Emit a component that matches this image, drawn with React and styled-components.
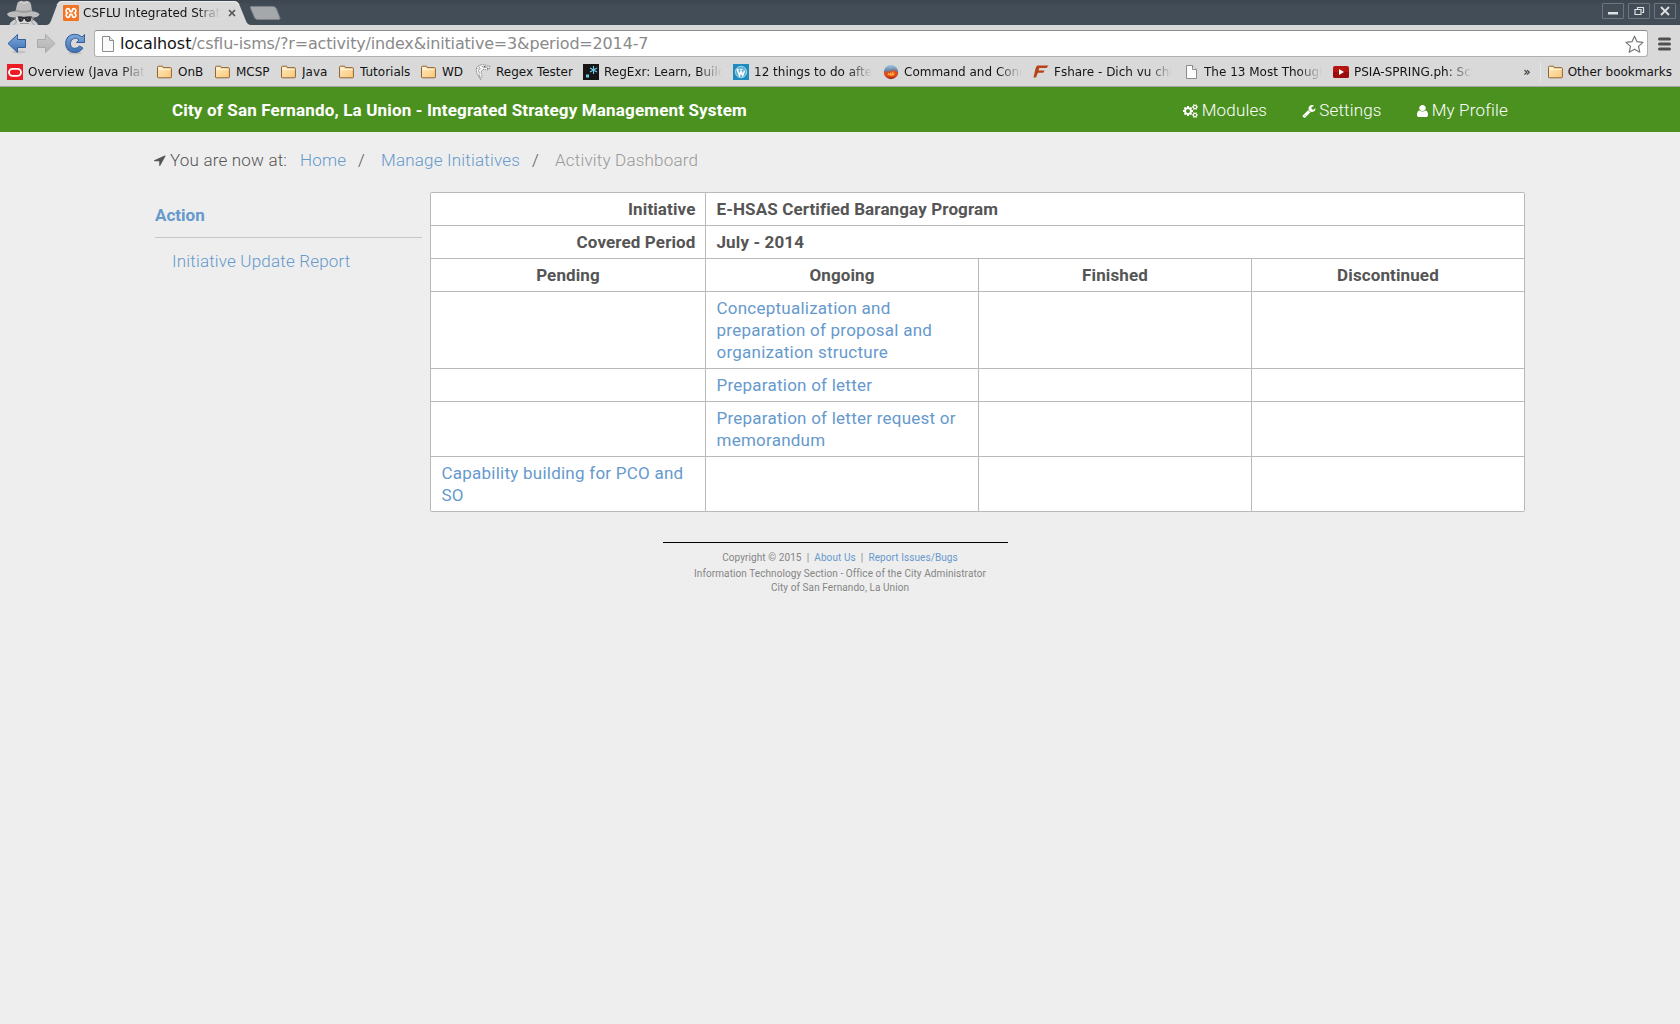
import React from 'react';
import styled, { createGlobalStyle } from 'styled-components';

const GlobalStyle = createGlobalStyle`
  * { box-sizing: border-box; }
  body { margin: 0; background: #eeeeee; font-family: Roboto, "Liberation Sans", sans-serif; color: #555555; }
  a { color: #6699cc; text-decoration: none; }
  svg { display: block; flex: none; }
`;

/* ---------- browser frame ---------- */

const Browser = styled.header`
  font-family: "DejaVu Sans", sans-serif;
  font-size: 12px;
  color: #141414;
  background: #d9d9d9;
  border-bottom: 1px solid #a6a6a6;
  height: 87px;
`;
const TitleBar = styled.div`
  height: 25px;
  display: flex;
  background: linear-gradient(#3d464f, #434d58 6px, #434d58);
`;
const Incognito = styled.div`
  width: 47px;
  padding-left: 7px;
`;
const Tab = styled.div`
  width: 203px;
  height: 25px;
  display: grid;
  > * { grid-area: 1 / 1; }
`;
const TabContent = styled.div`
  display: flex;
  align-items: center;
  padding: 1px 0 0 16px;
`;
const Fade = styled.span`
  display: block;
  overflow: hidden;
  white-space: nowrap;
  line-height: 18px;
  width: ${p => (p.$w ? `${p.$w}px` : 'auto')};
  mask-image: ${p => (p.$w ? 'linear-gradient(to right, #000 calc(100% - 24px), transparent)' : 'none')};
`;
const TabTitle = styled(Fade)`
  margin: 0 8px 0 4px;
`;
const NewTab = styled.div`
  padding: 6px 0 0 0;
`;
const WindowButtons = styled.div`
  margin: 3px 4px 0 auto;
  display: flex;
  gap: 4px;
`;
const WindowButton = styled.div`
  width: 22px;
  height: 16px;
  border: 1px solid #6d757e;
  border-radius: 1px;
  display: flex;
  align-items: center;
  justify-content: center;
`;

const Toolbar = styled.div`
  height: 32px;
  display: flex;
  align-items: center;
  padding: 5px 8px 0 7px;
`;
const NavButtons = styled.div`
  display: flex;
  width: 87px;
  gap: 9px;
`;
const AddressBar = styled.div`
  width: 1554px;
  height: 27px;
  background: #fff;
  border: 1px solid #b0b0b0;
  border-top-color: #8c8c8c;
  border-radius: 3px;
  display: flex;
  align-items: center;
  padding: 0 3px 0 7px;
`;
const Url = styled.span`
  flex: 1;
  font-size: 16px;
  line-height: 24px;
  margin-left: 6px;
  letter-spacing: -0.17px;
  color: #8a8a8a;
  b { font-weight: 400; color: #141414; letter-spacing: -0.05px; }
`;

const Bookmarks = styled.div`
  height: 29px;
  display: flex;
  align-items: center;
  padding: 0 8px 0 7px;
`;
const Bookmark = styled.div`
  width: ${p => (p.$w ? `${p.$w}px` : 'auto')};
  flex: none;
  display: flex;
  align-items: center;
  gap: ${p => p.$gap || 5}px;
`;
const Overflow = styled.span`
  margin-left: auto;
  padding-right: 9px;
  line-height: 18px;
`;
const Divider = styled.i`
  width: 1px;
  height: 22px;
  background: #e6e6e6;
  margin-right: 6px;
`;

/* ---------- page ---------- */

const NavBar = styled.nav`
  height: 45px;
  background: #4b9120;
  color: #fff;
  display: flex;
  align-items: center;
  padding: 0 172px;
  font-size: 17px;
  line-height: 22px;
`;
const Brand = styled.strong`
  font-weight: 700;
  letter-spacing: 0.16px;
  white-space: nowrap;
`;
const Menu = styled.div`
  margin-left: auto;
  display: flex;
  gap: 35px;
`;
const MenuItem = styled.span`
  display: flex;
  align-items: center;
  gap: ${p => p.$gap}px;
  font-weight: 300;
  letter-spacing: 0.18px;
  white-space: nowrap;
  svg { margin-top: 3px; }
`;
const Crumbs = styled.div`
  display: flex;
  align-items: center;
  height: 22px;
  margin: 17px 0 0 154px;
  font-size: 17px;
  line-height: 22px;
  font-weight: 300;
  letter-spacing: 0.19px;
  white-space: nowrap;
`;
const Crumb = styled.span`
  width: ${p => p.$w}px;
  color: ${p => p.$color || 'inherit'};
`;
const Layout = styled.div`
  display: flex;
  padding: 21px 0 0 154px;
`;
const Side = styled.aside`
  width: 267px;
  margin: 0 8px 0 1px;
  font-size: 17px;
  line-height: 22px;
`;
const SideTitle = styled.div`
  padding: 12px 0 11px;
  border-bottom: 1px solid #c6c6c6;
  color: #6699cc;
  font-weight: 700;
`;
const SideLink = styled.a`
  display: block;
  padding: 12px 0 0 17px;
  font-weight: 300;
  letter-spacing: 0.18px;
`;
const Table = styled.div`
  width: 1095px;
  display: grid;
  grid-template-columns: 274px 272px 272px 272px;
  gap: 1px;
  padding: 1px;
  background: #b9b9b9;
  border-radius: 2px;
  font-size: 17px;
  line-height: 22px;
`;
const Cell = styled.div`
  background: #fff;
  min-height: 32px;
  padding: 5px ${p => (p.$align === 'right' ? '9.5px' : '10.5px')} 5px 10.5px;
  grid-column: span ${p => p.$span || 1};
  text-align: ${p => p.$align || 'left'};
  font-weight: ${p => (p.$head ? 700 : 400)};
  letter-spacing: ${p => (p.$head ? '0.12px' : '0.24px')};
`;
const Footer = styled.footer`
  width: 345px;
  margin: 30px 0 0 663px;
  border-top: 1px solid #000;
  padding-top: 7px;
  font-size: 10px;
  letter-spacing: 0.08px;
  text-align: center;
  color: #858585;
`;
const FooterLine = styled.div`
  width: 354px;
  height: ${p => p.$h}px;
  line-height: 16px;
  white-space: pre;
`;

/* ---------- icons ---------- */

const Fa = ({ d, w, h, box = '0 0 1792 1792' }) => (
  <svg width={w} height={h} viewBox={box} fill="currentColor" preserveAspectRatio="none"><path d={d} /></svg>
);
const SMALL_COG_PATH = 'v140q0 16-149 31-12 27-30 52 51 113 51 138 0 4-4 7-122 71-124 71-8 0-46-47t-52-68q-20 2-30 2t-30-2q-14 21-52 68t-46 47q-2 0-124-71-4-3-4-7 0-25 51-138-18-25-30-52-149-15-149-31v-140q0-16 149-31 13-29 30-52-51-113-51-138 0-4 4-7 4-2 35-20t59-34 30-16q8 0 46 46.5t52 67.5q20-2 30-2t30 2q51-71 92-112l6-2q4 0 124 70 4 3 4 7 0 25-51 138 17 23 30 52 149 15 149 31z';
const COGS = 'M832 896q0-106-75-181t-181-75-181 75-75 181 75 181 181 75 181-75 75-181zm768 512q0-52-38-90t-90-38-90 38-38 90q0 53 37.5 90.5t90.5 37.5 90.5-37.5 37.5-90.5zm0-1024q0-52-38-90t-90-38-90 38-38 90q0 53 37.5 90.5t90.5 37.5 90.5-37.5 37.5-90.5zm-384 421v185q0 10-7 19.5t-16 10.5l-155 24q-11 35-32 76 34 48 90 115 7 11 7 20 0 12-7 19-23 30-82.5 89.5t-78.5 59.5q-11 0-21-7l-115-90q-37 19-77 31-11 108-23 155-7 24-30 24h-186q-11 0-20-7.5t-10-17.5l-23-153q-34-10-75-31l-118 89q-7 7-20 7-11 0-21-8-144-133-144-160 0-9 7-19 10-14 41-53t47-61q-23-44-35-82l-152-24q-10-1-17-9.5t-7-19.5v-185q0-10 7-19.5t16-10.5l155-24q11-35 32-76-34-48-90-115-7-11-7-20 0-12 7-20 22-30 82-89t79-59q11 0 21 7l115 90q34-18 77-32 11-108 23-154 7-24 30-24h186q11 0 20 7.5t10 17.5l23 153q34 10 75 31l118-89q8-7 20-7 11 0 21 8 144 133 144 160 0 8-7 19-12 16-42 54t-45 60q23 48 34 82l152 23q10 2 17 10.5t7 19.5zm640 533' + SMALL_COG_PATH + 'm0-1024' + SMALL_COG_PATH;
const WRENCH = 'M448 1472q0-26-19-45t-45-19-45 19-19 45 19 45 45 19 45-19 19-45zm644-420l-682 682q-37 37-90 37-52 0-91-37l-106-108q-38-36-38-90 0-53 38-91l681-681q39 98 114.5 173.5t173.5 114.5zm634-435q0 39-23 106-47 134-164.5 217.5t-258.5 83.5q-185 0-316.5-131.5t-131.5-316.5 131.5-316.5 316.5-131.5q58 0 121.5 16.5t107.5 46.5q16 11 16 28t-16 28l-293 169v224l193 107q5-3 79-48.5t135.5-81 70.5-35.5q15 0 23.5 10t8.5 25z';
const USER = 'M1536 1399q0 109-62.5 187t-150.5 78h-854q-88 0-150.5-78t-62.5-187q0-85 8.5-160.5t31.5-152 58.5-131 94-89 134.5-34.5q131 128 313 128t313-128q76 0 134.5 34.5t94 89 58.5 131 31.5 152 8.5 160.5zm-256-887q0 159-112.5 271.5t-271.5 112.5-271.5-112.5-112.5-271.5 112.5-271.5 271.5-112.5 271.5 112.5 112.5 271.5z';
const ARROW = 'M1593 349l-640 1280q-17 35-57 35-5 0-15-2-22-5-35.5-22.5t-13.5-39.5v-576h-576q-22 0-39.5-13.5t-22.5-35.5 4-42 29-30l1280-640q13-7 29-7 27 0 45 19 15 14 18.5 34.5t-6.5 39.5z';

const Folder = () => (
  <svg width="16" height="16" viewBox="0 0 16 16">
    <defs>
      <linearGradient id="folder" x1="0" y1="0" x2="1" y2="1">
        <stop offset="0" stopColor="#ffe9bd" /><stop offset="1" stopColor="#fbc878" />
      </linearGradient>
    </defs>
    <path d="M1.5 13V3.2q0-1 1-1h3.8q.8 0 .9 1v.4h7.2q1 0 1 1V13q0 .8-.9.8H2.4q-.9 0-.9-.8z" fill="url(#folder)" stroke="#8f6538" />
    <path d="M2.5 5V3.3H6V5z" fill="#fff0cf" /><path d="M2.5 5.5H14.5" stroke="#fff3d8" />
  </svg>
);
const Page = () => (
  <svg width="16" height="16" viewBox="0 0 16 16">
    <path d="M3.5 1.5h6l4 4v9h-10z" fill="#fcfcfc" stroke="#8c8c8c" /><path d="M9.5 1.5v4h4" fill="#e8e8e8" stroke="#8c8c8c" />
  </svg>
);
const Oracle = () => (
  <svg width="16" height="16" viewBox="0 0 16 16"><path fill="#ed1c24" d="M0 0h16v16H0z" /><rect x="2" y="4.8" width="12" height="7" rx="3.5" fill="none" stroke="#fff" strokeWidth="1.8" /></svg>
);
const Horse = () => (
  <svg width="16" height="16" viewBox="0 0 16 16">
    <path d="M1.500 3.500Q3.500 1 7 .8q3-.3 4.500 1l3.500.4-.5 2.500-3 1.600Q9.500 4.500 7.500 6q-2 1.800-1 4 1 2-.3 3.500l-.7 2-2-3.500L1.200 8z" fill="#f4f4f4" stroke="#6e6e6e" strokeWidth=".8" strokeDasharray="1.600 .7" />
    <path d="M4 2.500l1 2-1.500 2 1 3M7 2.200l2 1.300 3-.3M2.500 5l1-1M4 10.500l1.200 3" stroke="#777" fill="none" strokeWidth=".7" />
    <path d="M9 2.600l1.500-.3M12 4.300h1.500" stroke="#444" strokeWidth=".9" />
  </svg>
);
const RegExr = () => (
  <svg width="16" height="16" viewBox="0 0 16 16"><path fill="#161616" d="M0 0h16v16H0z" /><path fill="#70cdf0" d="M3 10.500h3v3H3z" /><path d="M10.500 2v8M7 4.100l7 3.800M14 4.100L7 7.900" stroke="#70cdf0" strokeWidth="1.100" /></svg>
);
const WordPress = () => (
  <svg width="16" height="16" viewBox="0 0 16 16">
    <path fill="#1e8cbe" d="M0 0h16v16H0z" />
    <circle cx="8" cy="8" r="5.700" fill="#5fb0d6" />
    <circle cx="8" cy="8" r="5.700" fill="none" stroke="#c9e6f3" strokeWidth=".7" />
    <path d="M4.300 5.500l2.200 6L8 7.400l1.700 4.100 1.900-5" stroke="#fff" fill="none" strokeWidth="1.500" />
    <path d="M3.500 5.400h2.800M7 5.400h2.800" stroke="#fff" strokeWidth=".9" />
  </svg>
);
const FireGlobe = () => (
  <svg width="16" height="16" viewBox="0 0 16 16">
    <defs>
      <linearGradient id="globe" x1="0" y1="0" x2="0" y2="1">
        <stop offset="0" stopColor="#a9c8e2" /><stop offset=".4" stopColor="#6388ab" /><stop offset=".6" stopColor="#c63b16" /><stop offset="1" stopColor="#a52d17" />
      </linearGradient>
    </defs>
    <circle cx="8" cy="8" r="7.200" fill="url(#globe)" />
    <path d="M1 8.500l1.800-1 .8 1.700L5 6l1 3.200L8 5.400l.4 3.200L11 4l-.3 4.200 2.300-2.600-.1 3.200 2-1.100q-.3 3.300-2.800 4.800-4.100 1.300-8.200 0Q1.500 11 1 8.500z" fill="#e4501b" />
    <path d="M4.500 10.500l1-2 .8 1.700L8 7.700l.4 2.300 1.900-3 .2 3 1.500-1.200-1.200 2.400q-3 .8-6.300-.7z" fill="#ffb03a" />
  </svg>
);
const Fshare = () => (
  <svg width="16" height="16" viewBox="0 0 16 16"><path d="M3.500 1.500H15.500L13.500 4H6.300L5.600 6.400h6l-1.300 2.300H4.900L3 13.500H.5L2.500 4.500q.4-1.700 1.700-3z" fill="#b8431a" /></svg>
);
const Play = () => (
  <svg width="16" height="16" viewBox="0 0 16 16"><rect y="2" width="16" height="12" rx="2" fill="#b5140f" /><path d="M0 8h16v4q0 2-2 2H2q-2 0-2-2z" fill="#990d0a" /><path d="M6 5l5 3-5 3z" fill="#fff" /></svg>
);

const BOOKMARKS = [
  [149, Oracle, 'Overview (Java Platform', 117],
  [58, Folder, 'OnB'],
  [66, Folder, 'MCSP'],
  [58, Folder, 'Java'],
  [82, Folder, 'Tutorials'],
  [55, Folder, 'WD'],
  [108, Horse, 'Regex Tester'],
  [150, RegExr, 'RegExr: Learn, Build', 118],
  [150, WordPress, '12 things to do after', 118],
  [150, FireGlobe, 'Command and Conquer', 118],
  [150, Fshare, 'Fshare - Dich vu chia', 118],
  [150, Page, 'The 13 Most Thought', 118],
  [150, Play, 'PSIA-SPRING.ph: Sch', 118],
];

const Spy = () => (
  <svg width="34" height="25" viewBox="0 0 34 25">
    <path d="M2.500 25q.5-3.500 5.500-5.500H25q5 2 6 5.500z" fill="#cfcfcf" />
    <path d="M9 15h16l.5 5-4 5h-9l-4-5z" fill="#dadada" />
    <path d="M0 14Q1 11.800 8.500 11.300L10 4.500Q10.500 2 12 1.500l2.500-.7q2.500 1 5 0L22 1.500q1.500.5 2 3l1.200 6.800Q31.500 12 32.500 14.500 31 17.500 26 17.500 17 15 8 17.500 1 17.500 0 14z" fill="#bcbcbc" />
    <path d="M9 9.500q8 2.500 15.700 0l.4 2q-8 2.800-16.500 0z" fill="#9c9ea0" />
    <path d="M13 2q4 3 8 0" fill="none" stroke="#d8d8d8" />
    <path d="M10.500 16.500q3-.8 6.500.3 3.500-1.100 8.500-.3l-1 1.200q0 4.300-3.500 4.300-2.700 0-3.300-3h-1q-.6 3-2.700 3-2.800 0-2.800-4z" fill="#2f3337" />
    <path d="M13.500 18l1.200 1.500M20 18l1.500 1.500" stroke="#777c80" strokeWidth=".8" />
    <path d="M7.500 18l2 4-3 3M26.500 18l-2 4 3 3M13 23.500h9" fill="none" stroke="#94979a" />
  </svg>
);
const Xampp = () => (
  <svg width="16" height="16" viewBox="0 0 16 16">
    <rect width="16" height="16" rx="1" fill="#f37423" />
    <path d="M4.800 3.700Q6.300 3.500 6.600 5l.2 1q.2.700.8.700h.8q.6 0 .8-.7l.2-1q.3-1.500 1.800-1.300 1.700.2 1.700 2.100 0 1.500-1.100 2.200 1.100.7 1.100 2.200 0 1.900-1.700 2.100-1.500.2-1.800-1.300l-.2-1q-.2-.7-.8-.7h-.8q-.6 0-.8.7l-.2 1q-.3 1.500-1.800 1.300-1.700-.2-1.700-2.100Q3.100 8.700 4.200 8 3.100 7.300 3.100 5.800q0-1.900 1.700-2.100z" fill="none" stroke="#fff" strokeWidth="1.700" />
  </svg>
);
const Gradients = () => (
  <defs>
    <linearGradient id="blue" x1="0" y1="0" x2="0" y2="1"><stop offset="0" stopColor="#7fa9dc" /><stop offset="1" stopColor="#3c70b2" /></linearGradient>
    <linearGradient id="gray" x1="0" y1="0" x2="0" y2="1"><stop offset="0" stopColor="#cacaca" /><stop offset="1" stopColor="#b2b2b2" /></linearGradient>
  </defs>
);

export default function App() {
  return (
    <>
      <GlobalStyle />
      <Browser>
        <TitleBar>
          <Incognito><Spy /></Incognito>
          <Tab>
            <svg width="205" height="25" viewBox="0 0 205 25">
              <path d="M0 25q3-1 4-4L10 5q1.500-4 5-4H187q4 0 5.500 4L199 21q1.500 4 5 4z" fill="#d9d9d9" />
              <path d="M10 5q1.500-3.500 5-3.500H187q3.500 0 5 3.500" stroke="#ececec" fill="none" />
            </svg>
            <TabContent>
              <Xampp />
              <TabTitle $w={137}>CSFLU Integrated Strategy</TabTitle>
              <svg width="8" height="8" viewBox="0 0 8 8"><path d="M1 1l6 6M7 1L1 7" stroke="#555" strokeWidth="1.700" /></svg>
            </TabContent>
          </Tab>
          <NewTab>
            <svg width="31" height="14" viewBox="0 0 31 14"><path d="M1 .5H23q2.500 0 3.500 2.500L30 12q.5 1.500-1.500 1.500H7.500q-2 0-3-2L.5 2Q0 .5 1 .5z" fill="#a5a8ab" stroke="#7d8287" /></svg>
          </NewTab>
          <WindowButtons>
            <WindowButton><svg width="10" height="10" viewBox="0 0 10 10"><path d="M0 6h10v2.500H0z" fill="#dfe1e3" /></svg></WindowButton>
            <WindowButton><svg width="11" height="10" viewBox="0 0 11 10"><path d="M3.500 3V1.500h6v5H8M1 3.500h6v5H1z" fill="none" stroke="#dfe1e3" strokeWidth="1.200" /></svg></WindowButton>
            <WindowButton><svg width="10" height="10" viewBox="0 0 10 10"><path d="M1 1l8 8M9 1L1 9" stroke="#dfe1e3" strokeWidth="1.800" /></svg></WindowButton>
          </WindowButtons>
        </TitleBar>
        <Toolbar>
          <NavButtons>
            <svg width="20" height="22" viewBox="0 0 20 22">
              <Gradients />
              <ellipse cx="12" cy="19" rx="7" ry="1.500" fill="#000" opacity=".1" />
              <path d="M1 10.500L10.500 1.500V6.500H18.500V14.500H10.500V19.500z" fill="url(#blue)" stroke="#345f9b" />
            </svg>
            <svg width="20" height="22" viewBox="0 0 20 22"><path d="M19 10.500L9.500 1.500V6.500H1.500V14.500H9.500V19.500z" fill="url(#gray)" stroke="#aaa" /></svg>
            <svg width="22" height="22" viewBox="0 0 22 22">
              <ellipse cx="10" cy="20" rx="7" ry="1.500" fill="#000" opacity=".1" />
              <path d="M19.500 1.500V9.500H11.500L14 7Q12 4.700 9.500 5.200 5.500 6 5.300 10.300 5.500 15 9.500 15.400 12.500 15.500 14.500 13L18 15Q15 19.500 9.500 19.500 1 19 .6 10.500 1 2 9 1.300 13.500 1 17 4z" fill="url(#blue)" stroke="#345f9b" />
            </svg>
          </NavButtons>
          <AddressBar>
            <svg width="12" height="16" viewBox="0 0 12 16"><path d="M.5.5h7l4 4v11H.5z" fill="#fafafa" stroke="#8c8c8c" /><path d="M7.500.5v4h4" fill="#e5e5e5" stroke="#8c8c8c" /></svg>
            <Url><b>localhost</b>/csflu-isms/?r=activity/index&amp;initiative=3&amp;period=2014-7</Url>
            <svg width="19" height="18" viewBox="0 0 19 18"><path d="M9.500 1.200L12 6.700l6 .7-4.500 4 1.300 5.800-5.300-3-5.300 3 1.300-5.800L1 7.400l6-.7z" fill="#fff" stroke="#777" strokeWidth="1.200" strokeLinejoin="round" /></svg>
          </AddressBar>
          <svg width="23" height="14" viewBox="0 0 23 14"><path d="M11.500 2h10M11.500 7h10M11.500 12h10" stroke="#505050" strokeWidth="3" strokeLinecap="round" /></svg>
        </Toolbar>
        <Bookmarks>
          {BOOKMARKS.map(([w, Icon, label, max]) => (
            <Bookmark key={label} $w={w} $gap={Icon === Folder ? 6 : 5}><Icon /><Fade $w={max}>{label}</Fade></Bookmark>
          ))}
          <Overflow>»</Overflow>
          <Divider />
          <Bookmark><Folder /><Fade>Other bookmarks</Fade></Bookmark>
        </Bookmarks>
      </Browser>

      <NavBar>
        <Brand>City of San Fernando, La Union - Integrated Strategy Management System</Brand>
        <Menu>
          <MenuItem $gap={4}><Fa d={COGS} box="-64 0 1920 1792" w={15} h={14} />Modules</MenuItem>
          <MenuItem $gap={3}><Fa d={WRENCH} w={14} h={14} />Settings</MenuItem>
          <MenuItem $gap={4}><Fa d={USER} box="256 128 1280 1536" w={11} h={12} />My Profile</MenuItem>
        </Menu>
      </NavBar>
      <Crumbs>
        <Crumb $w={16}><Fa d={ARROW} box="192 64 1472 1600" w={12} h={12} /></Crumb>
        <Crumb $w={130}>You are now at:</Crumb>
        <Crumb $w={58}><a>Home</a></Crumb>
        <Crumb $w={23}>/</Crumb>
        <Crumb $w={151}><a>Manage Initiatives</a></Crumb>
        <Crumb $w={23}>/</Crumb>
        <Crumb $w={150} $color="#999">Activity Dashboard</Crumb>
      </Crumbs>
      <Layout>
        <Side>
          <SideTitle>Action</SideTitle>
          <SideLink>Initiative Update Report</SideLink>
        </Side>
        <Table>
          <Cell $head $align="right">Initiative</Cell><Cell $head $span={3}>E-HSAS Certified Barangay Program</Cell>
          <Cell $head $align="right">Covered Period</Cell><Cell $head $span={3}>July - 2014</Cell>
          {['Pending', 'Ongoing', 'Finished', 'Discontinued'].map(h => <Cell key={h} $head $align="center">{h}</Cell>)}
          <Cell /><Cell><a>Conceptualization and preparation of proposal and organization structure</a></Cell><Cell /><Cell />
          <Cell /><Cell><a>Preparation of letter</a></Cell><Cell /><Cell />
          <Cell /><Cell><a>Preparation of letter request or memorandum</a></Cell><Cell /><Cell />
          <Cell><a>Capability building for PCO and SO</a></Cell><Cell /><Cell /><Cell />
        </Table>
      </Layout>
      <Footer>
        <FooterLine $h={16}>Copyright © 2015  |  <a>About Us</a>  |  <a>Report Issues/Bugs</a></FooterLine>
        <FooterLine $h={14}>Information Technology Section - Office of the City Administrator</FooterLine>
        <FooterLine $h={14}>City of San Fernando, La Union</FooterLine>
      </Footer>
    </>
  );
}
